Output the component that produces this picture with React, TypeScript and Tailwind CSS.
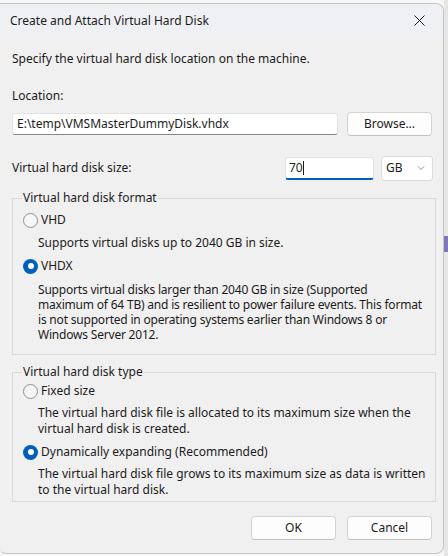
import { ChevronDown } from "lucide-react";

const font = { fontFamily: '"Noto Sans", "Open Sans", sans-serif' };

const Radio = ({ checked, label }: { checked?: boolean; label: string }) => (
  <label className="flex items-center h-[16px] gap-[3px]">
    {checked ? (
      <span className="w-[15px] h-[15px] rounded-full bg-[#005fb8] flex items-center justify-center">
        <span className="w-[6px] h-[6px] rounded-full bg-white" />
      </span>
    ) : (
      <span className="w-[15px] h-[15px] rounded-full border border-[#8f8f8f] bg-[#f6f6f6]" />
    )}
    <span>{label}</span>
  </label>
);

const Button = ({ children }: { children: string }) => (
  <button className="w-[85px] h-[24px] rounded-[4px] bg-[#fdfdfd] border border-[#d3d3d3] border-b-[#c2c2c2] text-[12px] text-[#1b1b1b]">
    {children}
  </button>
);

export default function App() {
  return (
    <div className="w-[448px] h-[556px] bg-[#e6e6e6] flex" style={font}>
      <div className="w-[444px] pt-[3px] bg-[#f7f7f7]">
        <div className="h-[551px] bg-[#f0f0f0] rounded-r-[8px] rounded-bl-[6px] border-r border-t border-b border-[#c4c4c4] flex flex-col text-[12px] text-[#1b1b1b] leading-[16px] overflow-hidden">
          {/* title bar */}
          <div className="h-[33px] flex items-center justify-between pl-[10px] pr-[9px] bg-[#eff0f4]">
            <span>Create and Attach Virtual Hard Disk</span>
            <div className="w-[24px] h-[24px] flex items-center justify-center mr-[3px]">
              <svg width="11" height="11" viewBox="0 0 11 11" stroke="#1b1b1b" strokeWidth="1">
                <path d="M0.5 0.5 L10.5 10.5 M10.5 0.5 L0.5 10.5" />
              </svg>
            </div>
          </div>

          <div className="pl-[12px] pr-[9px] flex flex-col">
            <p className="mt-[14px]">Specify the virtual hard disk location on the machine.</p>

            <p className="mt-[21px]">Location:</p>
            <div className="mt-[7px] flex items-center justify-between h-[25px]">
              <div className="w-[326px] h-[22px] bg-white border border-[#e3e3e3] border-b-[#868686] rounded-[3px] flex items-center pl-[4px]">
                E:\temp\VMSMasterDummyDisk.vhdx
              </div>
              <div className="mr-[2px]">
                <Button>Browse...</Button>
              </div>
            </div>

            <div className="mt-[20px] flex items-center h-[24px]">
              <span className="flex-1">Virtual hard disk size:</span>
              <div className="w-[89px] h-[23px] bg-white border border-[#e3e3e3] border-b-2 border-b-[#005fb8] rounded-[3px] flex items-center pl-[3px]">
                70<span className="w-px h-[14px] bg-[#1b1b1b]" />
              </div>
              <div className="ml-[7px] mr-[1px] w-[52px] h-[25px] bg-white border border-[#dcdcdc] rounded-[3px] flex items-center justify-between pl-[4px] pr-[5px]">
                <span>GB</span>
                <ChevronDown className="w-[12px] h-[12px] text-[#707070]" strokeWidth={1.5} />
              </div>
            </div>

            <fieldset className="mt-[10px] mr-0 w-[424px] border border-[#d9d9d9] pl-[10px] pb-[12px]">
              <legend className="px-[1px] -ml-[1px] leading-[16px]">Virtual hard disk format</legend>
              <div className="mt-[6px]">
                <Radio label="VHD" />
              </div>
              <p className="mt-[7px] pl-[15px]">Supports virtual disks up to 2040 GB in size.</p>
              <div className="mt-[7px]">
                <Radio checked label="VHDX" />
              </div>
              <p className="mt-[8px] pl-[15px] leading-[15px] tracking-[-0.2px]">
                Supports virtual disks larger than 2040 GB in size (Supported
                <br />
                maximum of 64 TB) and is resilient to power failure events. This format
                <br />
                is not supported in operating systems earlier than Windows 8 or
                <br />
                Windows Server 2012.
              </p>
            </fieldset>

            <fieldset className="mt-[9px] w-[424px] border border-[#d9d9d9] pl-[10px] pb-[4px]">
              <legend className="px-[1px] -ml-[1px] leading-[16px]">Virtual hard disk type</legend>
              <div className="mt-[3px]">
                <Radio label="Fixed size" />
              </div>
              <p className="mt-[6px] pl-[15px] pr-[6px] leading-[15.5px]">
                The virtual hard disk file is allocated to its maximum size when the virtual hard disk is created.
              </p>
              <div className="mt-[8px]">
                <Radio checked label="Dynamically expanding (Recommended)" />
              </div>
              <p className="mt-[6px] pl-[15px] pr-[6px] leading-[15.5px]">
                The virtual hard disk file grows to its maximum size as data is written to the virtual hard disk.
              </p>
            </fieldset>

            <div className="mt-[14px] flex justify-end gap-[11px] pr-[2px]">
              <Button>OK</Button>
              <Button>Cancel</Button>
            </div>
          </div>
        </div>
      </div>
      <div className="flex-1 flex flex-col">
        <div className="h-[236px] bg-[#e6e6e6]" />
        <div className="h-[16px] bg-[#7e78b8]" />
      </div>
    </div>
  );
}
